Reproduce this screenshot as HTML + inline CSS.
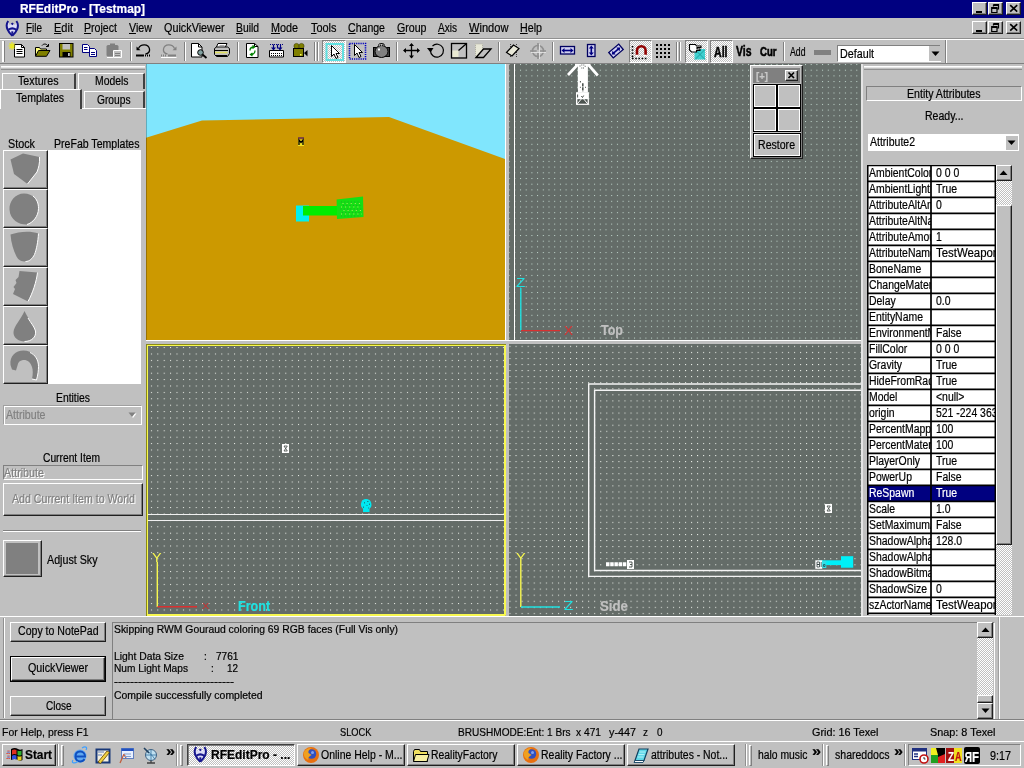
<!DOCTYPE html>
<html><head><meta charset="utf-8"><title>RFEditPro - [Testmap]</title>
<style>
html,body{margin:0;padding:0}
body{width:1024px;height:768px;position:relative;overflow:hidden;background:#c0c0c0;font-family:"Liberation Sans",sans-serif;color:#000}
div,span,svg{position:absolute;box-sizing:border-box}
.t{white-space:pre;transform-origin:0 0;line-height:1;-webkit-text-stroke:.2px}
.t u{text-decoration:underline;text-underline-offset:1px}
.rz{border:1px solid;border-color:#fff #202020 #202020 #fff;box-shadow:inset -1px -1px 0 #808080;background:#c0c0c0}
.sk{border:1px solid;border-color:#808080 #fff #fff #808080;background:#c0c0c0}
.sk2{border:1px solid;border-color:#808080 #fff #fff #808080;box-shadow:inset 1px 1px 0 #404040;background:#fff}
.pr{border:1px solid;border-color:#404040 #fff #fff #404040;box-shadow:inset 1px 1px 0 #808080;background:#c0c0c0}
.dith{background-image:conic-gradient(#fff 25%,#c0c0c0 0 50%,#fff 0 75%,#c0c0c0 0);background-size:2px 2px}
.vp{background-color:#5f6763;overflow:hidden}
.dots{left:0;top:0;width:100%;height:100%;background-image:radial-gradient(circle at 0.8px 0.8px,rgba(235,240,225,.85) 0.55px,rgba(235,240,225,0) 1.1px);background-size:6.4px 6.4px}
#w{left:0;top:0;width:1024px;height:768px;will-change:transform}

</style></head><body>
<div id="w">
<div class="" style="left:0px;top:0px;width:1024px;height:18px;background:#000080"></div>
<span class="t" style="left:20.0px;top:2.8px;font-size:12px;transform:scaleX(0.994);font-weight:bold;color:#fff;">RFEditPro - [Testmap]</span>
<div class="rz" style="left:972px;top:2px;width:15px;height:13px;"></div>
<div class="rz" style="left:988px;top:2px;width:15px;height:13px;"></div>
<div class="rz" style="left:1006px;top:2px;width:15px;height:13px;"></div>
<div style="left:976px;top:11px;width:6px;height:2px;background:#000"></div>
<svg style="left:988px;top:2px" width="15" height="13" viewBox="0 0 15 13"><path d="M5.500 2.500h5v4.500h-1.500 M5.500 3.500h5 M5.500 2.500v2" fill="none" stroke="#000" stroke-width="1.200"/><path d="M3.700 5.500h5.300v5h-5.300z M3.700 6.500h5.300" fill="none" stroke="#000" stroke-width="1.200"/></svg>
<svg style="left:1006px;top:2px" width="15" height="13" viewBox="0 0 15 13"><path d="M4.200 3.200l7 6.500 M11.200 3.200l-7 6.500" fill="none" stroke="#000" stroke-width="1.600"/></svg>
<div class="rz" style="left:972px;top:21px;width:15px;height:13px;"></div>
<div class="rz" style="left:988px;top:21px;width:15px;height:13px;"></div>
<div class="rz" style="left:1006px;top:21px;width:15px;height:13px;"></div>
<div style="left:976px;top:30px;width:6px;height:2px;background:#000"></div>
<svg style="left:988px;top:21px" width="15" height="13" viewBox="0 0 15 13"><path d="M5.500 2.500h5v4.500h-1.500 M5.500 3.500h5 M5.500 2.500v2" fill="none" stroke="#000" stroke-width="1.200"/><path d="M3.700 5.500h5.300v5h-5.300z M3.700 6.500h5.300" fill="none" stroke="#000" stroke-width="1.200"/></svg>
<svg style="left:1006px;top:21px" width="15" height="13" viewBox="0 0 15 13"><path d="M4.200 3.200l7 6.500 M11.200 3.200l-7 6.500" fill="none" stroke="#000" stroke-width="1.600"/></svg>
<span class="t" style="left:26.0px;top:21.8px;font-size:12px;transform:scaleX(0.827);"><u>F</u>ile</span>
<span class="t" style="left:54.0px;top:21.8px;font-size:12px;transform:scaleX(0.919);"><u>E</u>dit</span>
<span class="t" style="left:84.0px;top:21.8px;font-size:12px;transform:scaleX(0.884);"><u>P</u>roject</span>
<span class="t" style="left:129.0px;top:21.8px;font-size:12px;transform:scaleX(0.892);"><u>V</u>iew</span>
<span class="t" style="left:164.0px;top:21.8px;font-size:12px;transform:scaleX(0.901);">QuickViewer</span>
<span class="t" style="left:236.0px;top:21.8px;font-size:12px;transform:scaleX(0.862);"><u>B</u>uild</span>
<span class="t" style="left:271.0px;top:21.8px;font-size:12px;transform:scaleX(0.899);"><u>M</u>ode</span>
<span class="t" style="left:310.5px;top:21.8px;font-size:12px;transform:scaleX(0.910);"><u>T</u>ools</span>
<span class="t" style="left:348.0px;top:21.8px;font-size:12px;transform:scaleX(0.880);"><u>C</u>hange</span>
<span class="t" style="left:397.0px;top:21.8px;font-size:12px;transform:scaleX(0.884);"><u>G</u>roup</span>
<span class="t" style="left:438.0px;top:21.8px;font-size:12px;transform:scaleX(0.838);"><u>A</u>xis</span>
<span class="t" style="left:469.0px;top:21.8px;font-size:12px;transform:scaleX(0.925);"><u>W</u>indow</span>
<span class="t" style="left:520.0px;top:21.8px;font-size:12px;transform:scaleX(0.891);"><u>H</u>elp</span>
<svg style="left:5px;top:20px" width="15" height="17" viewBox="0 0 15 17"><path d="M3.200 1.500C1.800 4 1.800 7 2.800 9.500S5.500 14 7.300 15.500C9.100 14 10.800 12 11.800 9.500S12.800 4 11.400 1.500L10 5L7.300 3.500L4.600 5z" fill="#dcdcf6"/><path d="M3.200 1C1.400 3.500 1.400 6.800 2.500 9.300S5.300 14 7.300 15.800M11.400 1C13.200 3.500 13.200 6.800 12.100 9.300S9.300 14 7.300 15.800" fill="none" stroke="#14148c" stroke-width="2"/><path d="M7.300 2.400l1.500 1.400l-1.500 1.400l-1.500-1.400z" fill="#14148c"/><path d="M3 8.800Q7.300 5.800 11.600 8.800L11 10.800Q7.300 8.200 3.600 10.800z" fill="#14148c"/><rect x="6.300" y="11.300" width="2" height="2.600" fill="#14148c"/></svg>
<div class="" style="left:0px;top:38px;width:1024px;height:1px;background:#909090"></div>
<div class="" style="left:0px;top:39px;width:1024px;height:1px;background:#fff"></div>
<div class="" style="left:0px;top:63px;width:1024px;height:1px;background:#808080"></div>
<div class="" style="left:2px;top:41px;width:2px;height:21px;background:#fff;border-right:1px solid #808080;width:3px"></div>
<div class="" style="left:945px;top:40px;width:1px;height:23px;background:#808080"></div>
<div class="" style="left:946px;top:40px;width:1px;height:23px;background:#fff"></div>
<div class="dith" style="left:322px;top:40px;width:24px;height:23px;border:1px solid;border-color:#808080 #fff #fff #808080"></div>
<div class="dith" style="left:629px;top:40px;width:23px;height:23px;border:1px solid;border-color:#808080 #fff #fff #808080"></div>
<div class="dith" style="left:685px;top:40px;width:23px;height:23px;border:1px solid;border-color:#808080 #fff #fff #808080"></div>
<div class="dith" style="left:710px;top:40px;width:23px;height:23px;border:1px solid;border-color:#808080 #fff #fff #808080"></div>
<div class="" style="left:130px;top:42px;width:1px;height:19px;background:#808080"></div>
<div class="" style="left:131px;top:42px;width:1px;height:19px;background:#fff"></div>
<div class="" style="left:184px;top:42px;width:1px;height:19px;background:#808080"></div>
<div class="" style="left:185px;top:42px;width:1px;height:19px;background:#fff"></div>
<div class="" style="left:237px;top:42px;width:1px;height:19px;background:#808080"></div>
<div class="" style="left:238px;top:42px;width:1px;height:19px;background:#fff"></div>
<div class="" style="left:396px;top:42px;width:1px;height:19px;background:#808080"></div>
<div class="" style="left:397px;top:42px;width:1px;height:19px;background:#fff"></div>
<div class="" style="left:498px;top:42px;width:1px;height:19px;background:#808080"></div>
<div class="" style="left:499px;top:42px;width:1px;height:19px;background:#fff"></div>
<div class="" style="left:552px;top:42px;width:1px;height:19px;background:#808080"></div>
<div class="" style="left:553px;top:42px;width:1px;height:19px;background:#fff"></div>
<div class="" style="left:783px;top:42px;width:1px;height:19px;background:#808080"></div>
<div class="" style="left:784px;top:42px;width:1px;height:19px;background:#fff"></div>
<div class="" style="left:314px;top:42px;width:1px;height:19px;background:#808080"></div>
<div class="" style="left:315px;top:42px;width:1px;height:19px;background:#fff"></div>
<div class="" style="left:317px;top:42px;width:1px;height:19px;background:#808080"></div>
<div class="" style="left:318px;top:42px;width:1px;height:19px;background:#fff"></div>
<div class="" style="left:676px;top:42px;width:1px;height:19px;background:#808080"></div>
<div class="" style="left:677px;top:42px;width:1px;height:19px;background:#fff"></div>
<div class="" style="left:679px;top:42px;width:1px;height:19px;background:#808080"></div>
<div class="" style="left:680px;top:42px;width:1px;height:19px;background:#fff"></div>
<svg style="left:0;top:39px" width="1024" height="25" viewBox="0 39 1024 25"><path d="M14.500 44.500h7l3 3v9.500h-10z" fill="#fff" stroke="#000"/><path d="M21.500 44.500v3h3" fill="none" stroke="#000"/><path d="M16.500 49.500h6M16.500 51.500h6M16.500 53.500h6" stroke="#000"/><path d="M12 42v8M8.500 46h7M9.500 43.500l5 5M14.500 43.500l-5 5" stroke="#e8e820" stroke-width="1.200"/><path d="M35.500 56v-8.500h4l1 1.500h6v2" fill="#ffff80" stroke="#000"/><path d="M35.500 56.300l3-5.800h11.500l-3.500 5.800z" fill="#808000" stroke="#000"/><path d="M42 45.500c1.500-2 4.500-2 6 0.500m0.500-2v2.500h-2.500" fill="none" stroke="#000"/><rect x="59.500" y="43.500" width="13.500" height="13.500" fill="#808000" stroke="#000"/><rect x="62.500" y="44" width="7.500" height="5.500" fill="#c0c0c0"/><rect x="62.500" y="52" width="8" height="5" fill="#000"/><rect x="68" y="53" width="1.800" height="3" fill="#c0c0c0"/><path d="M82.500 44.500h5l2 2v6h-7z" fill="#fff" stroke="#000080"/><path d="M89.500 48.500h5l2 2v6h-7z" fill="#fff" stroke="#000080"/><path d="M84 47.500h3.500M84 49.500h3.500M91 52.500h4M91 54.500h4" stroke="#000080"/><rect x="106.500" y="45" width="12" height="11.500" rx="1.500" fill="#808080"/><rect x="110" y="43.500" width="5" height="3" fill="#808080"/><path d="M113.500 50.500h8v7h-8z" fill="#c0c0c0" stroke="#fff"/><path d="M115 53.500h5M115 55.500h5" stroke="#808080"/><path d="M107 57.500h6" stroke="#fff"/><path d="M138.500 48.500c2-5 10-5 11 0.500c0.500 3-1.500 4.500-4 5" fill="none" stroke="#000" stroke-width="1.300"/><path d="M136.500 46.500v3.800h4z" fill="#000"/><path d="M136 55.500h8" stroke="#000" stroke-width="2"/><path d="M145 55.500h6" stroke="#000" stroke-width="2" stroke-dasharray="1 1"/><path d="M174.500 48.500c-2-5-10-5-11 0.500c-0.500 3 1.500 4.500 4 5" fill="none" stroke="#808080" stroke-width="1.300"/><path d="M176.500 46.500v3.800h-4z" fill="#808080"/><path d="M168 55.500h8" stroke="#808080" stroke-width="2"/><path d="M161 55.500h6" stroke="#808080" stroke-width="2" stroke-dasharray="1 1"/><path d="M161 57.500h15.500" stroke="#fff"/><path d="M191.500 43.500h7l3.500 3.500v10h-10.500z" fill="#fff" stroke="#000"/><path d="M198.500 43.500v3.500h3.500" fill="none" stroke="#000"/><circle cx="200.500" cy="52.500" r="2.800" fill="#80a0a0" stroke="#000"/><path d="M202.500 54.500l4 3.500" stroke="#000" stroke-width="1.800"/><path d="M218 43.500h9l-2 4.500h-9z" fill="#fff" stroke="#000"/><path d="M214.500 48.500l2-1.500h11l2 1.500v5l-2 3h-11l-2-2z" fill="#c0c0c0" stroke="#000"/><path d="M215 52.500h12.500" stroke="#e0e060" stroke-width="1.500"/><path d="M215 50.500h13M216 55.500h11" stroke="#000"/><path d="M219.500 45.500h5M219 46.800h5" stroke="#808080" stroke-width=".7"/><path d="M246.500 43.500h8l3.500 3v11h-11.500z" fill="#fff" stroke="#000"/><path d="M254.500 43.500v3h3.500" fill="none" stroke="#000"/><path d="M250 50.500c0-2.500 2-3.500 4-3.500m-1.500-1.500l2 1.500l-2 1.500 M255 50.500c0 2.500-2 4-4 4m1.500-1.500l-2 1.500l2 1.500" fill="none" stroke="#008000" stroke-width="1.300"/><path d="M269.500 50.500h14v6.500h-14z" fill="#fff" stroke="#000"/><path d="M271 53.500h12M271 55.500h12" stroke="#000" stroke-dasharray="1 1"/><path d="M273.500 44.500v4m4 -4v4 M280.500 44.500v4" stroke="#000080" stroke-width="1.200"/><path d="M271 47.500h5l-2.500 3z M277.500 47.500h5l-2.500 3z" fill="#000080"/><path d="M270 44.500h13" stroke="#000080" stroke-dasharray="1 1"/><circle cx="296.500" cy="46" r="2.600" fill="#808000" stroke="#404000" stroke-width=".6"/><circle cx="301.500" cy="46" r="2.600" fill="#808000" stroke="#404000" stroke-width=".6"/><rect x="293.500" y="48.500" width="10" height="8" fill="#808000" stroke="#000"/><path d="M304 53l3.500-3v6.500z" fill="#000"/><rect x="300" y="54" width="1.500" height="1.500" fill="#ffff60"/><rect x="326.500" y="44" width="16.500" height="16" fill="none" stroke="#60e0e0" stroke-width="2"/><path d="M331.500 45.500v11l2.500-2.500l2 4.500l2-1l-2-4h3.500z" fill="#fff" stroke="#000"/><rect x="349.500" y="43.500" width="16" height="15.500" fill="none" stroke="#0000c0" stroke-width="1.600" stroke-dasharray="1.200 1"/><path d="M354.500 44.500v11l2.500-2.500l2 4.500l2-1l-2-4h3.500z" fill="#fff" stroke="#000"/><rect x="373.500" y="47.500" width="16" height="9" fill="#404040" stroke="#000"/><ellipse cx="381.500" cy="51.500" rx="6.500" ry="6" fill="#808080" stroke="#000"/><path d="M378.500 45.500c1-2.500 5-2.500 6 0" fill="none" stroke="#000" stroke-width="1.300"/><path d="M379 45h4.500" stroke="#fff" stroke-dasharray="1 1"/><rect x="378" y="48.500" width="2" height="2" fill="#fff"/><path d="M404 50.500h15M411.500 44v14" stroke="#000" stroke-width="1.300"/><path d="M403 50.500l3-2.500v5z M420 50.500l-3-2.500v5z M411.500 43l-2.500 3h5z M411.500 58.500l-2.500-3h5z" fill="#000"/><path d="M430.500 50.500a6.500 6.500 0 1 0 2-4.500" fill="none" stroke="#000" stroke-width="1.200"/><path d="M427 48h6.500l-3 4.500z" fill="#000"/><rect x="451.500" y="43.500" width="15" height="14.500" fill="none" stroke="#000" stroke-width="1.300"/><rect x="452.500" y="50.500" width="6" height="6.500" fill="#e8e8d0"/><path d="M458.500 50.500l7.500-6.500" stroke="#000" stroke-width="1.300"/><rect x="475.500" y="44" width="7" height="13" fill="#e8e8d8" stroke="#b0b0a0" stroke-dasharray="1 1"/><path d="M476 57.500l7.500-8.500h7.500l-7.500 8.500z" fill="#c0c0c0" stroke="#000" stroke-width="1.300"/><path d="M510.500 44v13.500M516.500 44v13.500" stroke="#404040" stroke-dasharray="1 1"/><path d="M506.500 52.500l7-7.500l5.500 3.500l-7 7.500z" fill="#e8e8d8" stroke="#000" stroke-width="1.200"/><circle cx="538" cy="51" r="5.500" fill="none" stroke="#909090" stroke-width="1.600"/><path d="M530 51h16M538 43v16" stroke="#909090" stroke-width="1.600"/><circle cx="538" cy="51" r="1.500" fill="#c0c0c0"/><path d="M531 52.500h15M539.500 44v15" stroke="#e8e8e8" stroke-width=".8"/><rect x="560.500" y="46.500" width="14" height="7.500" fill="#d0d0f0" stroke="#000060" stroke-width="1.300"/><path d="M563 50.500h9" stroke="#000080" stroke-width="1.600"/><path d="M561.500 50.500l3-2.500v5z M573.500 50.500l-3-2.500v5z" fill="#000080"/><rect x="587.500" y="44.500" width="7.500" height="12" fill="#d0d0f0" stroke="#000060" stroke-width="1.300"/><path d="M591.300 47v7" stroke="#000080" stroke-width="1.600"/><path d="M591.300 45.500l-2.500 3h5z M591.300 55.500l-2.500-3h5z" fill="#000080"/><g transform="rotate(-40 616 51)"><rect x="609.500" y="47.500" width="13" height="7" fill="#d0d0f0" stroke="#000060" stroke-width="1.300"/><path d="M612 51h8" stroke="#000080" stroke-width="1.600"/><path d="M610.500 51l3-2.500v5z M621.500 51l-3-2.500v5z" fill="#000080"/></g><path d="M637 56v-5.500a4.300 4.300 0 0 1 8.600 0v5.500" fill="none" stroke="#900000" stroke-width="2.600"/><path d="M635.500 55.500h3M643.800 55.500h3" stroke="#fff" stroke-width="1.600"/><path d="M632.500 46v13" stroke="#000" stroke-width="1.600" stroke-dasharray="1.600 1.600"/><path d="M632 58.500h16" stroke="#000" stroke-width="1.600" stroke-dasharray="1.600 1.600"/><path d="M656 45.0h14" stroke="#000" stroke-width="2" stroke-dasharray="2 2"/><path d="M656 49.0h14" stroke="#000" stroke-width="2" stroke-dasharray="2 2"/><path d="M656 53.0h14" stroke="#000" stroke-width="2" stroke-dasharray="2 2"/><path d="M656 57.0h14" stroke="#000" stroke-width="2" stroke-dasharray="2 2"/><rect x="694.500" y="49" width="10.500" height="10.500" fill="#40d0d0"/><path d="M695 49.500l10 10M705 49.500l-10 10" stroke="#20a0a0" stroke-width="1"/><path d="M689.500 44.500h6l1 1.500h4.500v1.500h-4v1.500h3v1.500h-3.500v1.500h-5l-2-2z" fill="#fff" stroke="#000" stroke-width="1.100"/><rect x="814" y="50" width="17" height="5" fill="#808080"/></svg>
<span class="t" style="left:714.0px;top:44.7px;font-size:14px;transform:scaleX(0.755);font-weight:bold;-webkit-text-stroke:.5px #000;">All</span>
<span class="t" style="left:736.0px;top:43.6px;font-size:14px;transform:scaleX(0.747);font-weight:bold;-webkit-text-stroke:.5px #000;">Vis</span>
<span class="t" style="left:759.8px;top:45.6px;font-size:12px;transform:scaleX(0.798);font-weight:bold;-webkit-text-stroke:.6px #000;">Cur</span>
<span class="t" style="left:789.8px;top:45.8px;font-size:12px;transform:scaleX(0.726);">Add</span>
<div class="" style="left:837px;top:45px;width:104px;height:17px;background:#fff;border:1px solid;border-color:#808080 #fff #fff #808080"></div>
<span class="t" style="left:839.5px;top:47.8px;font-size:12px;transform:scaleX(0.894);">Default</span>
<div class="" style="left:929px;top:46px;width:12px;height:15px;background:#c0c0c0"></div>
<svg style="left:930.500px;top:50.500px" width="9" height="6"><path d="M0.500 0.500h8l-4 4.500z" fill="#000"/></svg>
<div class="" style="left:1px;top:66px;width:144px;height:4px;background:linear-gradient(#e4e4e4 0 1px,#c0c0c0 1px);border-top:1px solid #fff;border-bottom:1px solid #909090"></div>
<div class="" style="left:2px;top:73px;width:74px;height:16px;border-top:1px solid #fff;border-left:1px solid #fff;border-right:2px solid #404040;background:#c0c0c0;"></div>
<div class="" style="left:78px;top:73px;width:67px;height:16px;border-top:1px solid #fff;border-left:1px solid #fff;border-right:2px solid #404040;background:#c0c0c0;"></div>
<div class="" style="left:84px;top:91px;width:61px;height:17px;border-top:1px solid #fff;border-left:1px solid #fff;border-right:2px solid #404040;background:#c0c0c0;"></div>
<div class="" style="left:0px;top:108px;width:146px;height:1px;background:#fff"></div>
<div class="" style="left:0px;top:89px;width:82px;height:20px;border-top:1px solid #fff;border-left:1px solid #fff;border-right:2px solid #404040;background:#c0c0c0;"></div>
<span class="t" style="left:17.5px;top:74.8px;font-size:12px;transform:scaleX(0.893);">Textures</span>
<span class="t" style="left:94.5px;top:74.8px;font-size:12px;transform:scaleX(0.866);">Models</span>
<span class="t" style="left:16.0px;top:92.1px;font-size:12px;transform:scaleX(0.878);">Templates</span>
<span class="t" style="left:96.5px;top:93.8px;font-size:12px;transform:scaleX(0.851);">Groups</span>
<span class="t" style="left:7.5px;top:137.6px;font-size:12px;transform:scaleX(0.900);">Stock</span>
<span class="t" style="left:53.5px;top:137.6px;font-size:12px;transform:scaleX(0.880);">PreFab Templates</span>
<div class="" style="left:48px;top:150px;width:93px;height:234px;background:#fff"></div>
<div class="rz" style="left:3px;top:150px;width:45px;height:39px;"></div>
<svg style="left:0px;top:150px" width="48" height="39" viewBox="0 0 48 39"><path d="M10.500 9.500l12.500-6l16.500 3.500c.5 6-1 11-2.500 15l-9.500 12l-13.500-10z" fill="#808080"/><path d="M39.500 7c.5 6-1 11-2.500 15l-9.500 12" fill="none" stroke="#fff" stroke-width="1"/></svg>
<div class="rz" style="left:3px;top:189px;width:45px;height:39px;"></div>
<svg style="left:0px;top:189px" width="48" height="39" viewBox="0 0 48 39"><path d="M24 4.500c9 0 14.500 6.500 14.500 15c0 8-6 14.500-11.500 16c-7 .5-17-4-17.500-15c-.5-8 5.500-16 14.500-16z" fill="#808080"/><path d="M33 7c4 3 5.500 7.500 5.500 12.500c0 8-6 14.500-11.500 16" fill="none" stroke="#fff" stroke-width="1"/></svg>
<div class="rz" style="left:3px;top:228px;width:45px;height:39px;"></div>
<svg style="left:0px;top:228px" width="48" height="39" viewBox="0 0 48 39"><path d="M10.500 6.500c8-3 20-4 28-1c-.5 8-2 16-4 21c-2 4-5 7-9 7c-4 0-7-1-9-5c-3-6-5.500-14-6-22z" fill="#808080"/><path d="M38.500 5.500c-.5 8-2 16-4 21c-2 4-5 7-9 7" fill="none" stroke="#fff" stroke-width="1"/></svg>
<div class="rz" style="left:3px;top:267px;width:45px;height:39px;"></div>
<svg style="left:0px;top:267px" width="48" height="39" viewBox="0 0 48 39"><path d="M19.500 4l18 1.500c-1 9-5 21-9.500 29l-15-7.500l2-5l-1.500-2l3-4l-1-3l3-3z" fill="#808080"/><path d="M37.500 5.500c-1 9-5 21-9.500 29" fill="none" stroke="#fff" stroke-width="1"/></svg>
<div class="rz" style="left:3px;top:306px;width:45px;height:39px;"></div>
<svg style="left:0px;top:306px" width="48" height="39" viewBox="0 0 48 39"><path d="M24.500 5c3 7 9.500 14 11 20c1 6-4 10.500-11 10.500c-6 0-11.500-4-11-9.500c.5-6 7-12 11-21z" fill="#808080"/><path d="M28 12c3 5 6.500 9 7.500 13c1 6-4 10.500-11 10.500" fill="none" stroke="#fff" stroke-width="1"/></svg>
<div class="rz" style="left:3px;top:345px;width:45px;height:39px;"></div>
<svg style="left:0px;top:345px" width="48" height="39" viewBox="0 0 48 39"><path d="M10.500 20c-1-9 5-14.500 13-14.500c9 0 15 7 15 16c0 4-.5 8-2 13.500l-4.500-1c1-5 1-9 0-12c-1.500-5-5-7.500-9-7c-3.500.5-5 2.500-5.500 5.500l-1.500 5l-4-1z" fill="#808080"/><path d="M30 7.500c5 2 8.500 7.500 8.500 14c0 4-.5 8-2 13.500l-4.500-1" fill="none" stroke="#fff" stroke-width="1"/></svg>
<span class="t" style="left:55.5px;top:391.8px;font-size:12px;transform:scaleX(0.864);">Entities</span>
<div class="" style="left:4px;top:406px;width:138px;height:19px;border:1px solid #fff;box-shadow:-1px -1px 0 #a0a0a0"></div>
<span class="t" style="left:6.0px;top:408.6px;font-size:12px;transform:scaleX(0.884);color:#808080;">Attribute</span>
<svg style="left:128px;top:412px" width="10" height="7"><path d="M1.500 1.500h7l-3.500 4.500z" fill="#fff"/><path d="M0.500 0.500h7l-3.500 4.500z" fill="#808080"/></svg>
<span class="t" style="left:42.5px;top:451.8px;font-size:12px;transform:scaleX(0.855);">Current Item</span>
<div class="sk" style="left:3px;top:465px;width:140px;height:15px;"></div>
<span class="t" style="left:4.8px;top:468.1px;font-size:12px;transform:scaleX(0.895);color:#fff;">Attribute</span>
<span class="t" style="left:3.8px;top:467.1px;font-size:12px;transform:scaleX(0.895);color:#808080;">Attribute</span>
<div class="rz" style="left:3px;top:483px;width:140px;height:33px;"></div>
<span class="t" style="left:13.0px;top:493.8px;font-size:12px;transform:scaleX(0.884);color:#fff;">Add Current Item to World</span>
<span class="t" style="left:12.0px;top:492.8px;font-size:12px;transform:scaleX(0.884);color:#808080;">Add Current Item to World</span>
<div class="" style="left:3px;top:530px;width:138px;height:1px;background:#808080"></div>
<div class="" style="left:3px;top:531px;width:138px;height:1px;background:#fff"></div>
<div class="rz" style="left:3px;top:540px;width:39px;height:37px;"></div>
<div class="" style="left:6px;top:543px;width:32px;height:31px;background:#808080"></div>
<span class="t" style="left:47.0px;top:553.8px;font-size:12px;transform:scaleX(0.891);">Adjust Sky</span>
<div class="" style="left:146px;top:340px;width:715px;height:1px;background:#fff"></div>
<div class="" style="left:505px;top:64px;width:1px;height:277px;background:#fff"></div>
<svg style="left:146px;top:64px" width="359" height="276" viewBox="146 64 359 276"><rect x="146" y="64" width="359" height="276" fill="#80e6fd"/><path d="M146 137.800L202 120.500L389 117L505 159V340H146z" fill="#cc9900"/><rect x="146" y="64" width="1" height="276" fill="#000" fill-opacity=".25"/><rect x="296" y="205.500" width="13" height="16" fill="#00f0f0"/><rect x="303" y="206" width="36" height="9.500" fill="#00ec00"/><path d="M336.600 199.500l26.400-3l.5 20.500l-26.500 2z" fill="#14e014"/><path d="M341 202h20M343 205.500h19M340.500 209h21M342 212.500h20M341 216h20" stroke="#20a828" stroke-width="1" stroke-dasharray="1 2.300"/><path d="M342.500 203.500h18M341 207h20M343.500 210.500h18M341 214h21" stroke="#b0e860" stroke-width="1" stroke-dasharray="1 3.100"/><rect x="298" y="137" width="6" height="2.500" fill="#80483c"/><rect x="298" y="139.500" width="6" height="6.500" fill="#f0e020"/><path d="M299 145v-5l2 2.500l2-2.500v5" fill="none" stroke="#000" stroke-width="1.300"/></svg>
<svg style="left:509px;top:64px" width="352" height="276" viewBox="0 0 352 276"><defs><pattern id="pt" x="5.30" y="0.00" width="5.7" height="5.7" patternUnits="userSpaceOnUse"><rect width="1" height="1" fill="#d4ece2" fill-opacity="0.85"/></pattern></defs><rect width="352" height="276" fill="#646c68"/><rect width="352" height="276" fill="url(#pt)"/></svg>
<div class="" style="left:514px;top:64px;width:1px;height:276px;background:#fff"></div>
<svg style="left:146px;top:344px" width="360" height="272" viewBox="0 0 360 272"><defs><pattern id="pf" x="4.90" y="3.10" width="6.4" height="6.4" patternUnits="userSpaceOnUse"><rect width="1" height="1" fill="#f2f5ee" fill-opacity="1"/></pattern></defs><rect width="360" height="272" fill="#646c68"/><rect width="360" height="272" fill="url(#pf)"/><rect x="1.500" y="1.500" width="357" height="269" fill="none" stroke="#f8f850" stroke-width="1"/><path d="M0.500 272V0.500H360" fill="none" stroke="#8c8c14" stroke-width="1"/><path d="M1 271.500H359.500V1" fill="none" stroke="#f8f850" stroke-width="1"/></svg>
<div class="" style="left:148px;top:514px;width:356px;height:1px;background:#f0f0f0"></div>
<div class="" style="left:148px;top:520px;width:356px;height:1px;background:#f0f0f0"></div>
<svg style="left:509px;top:344px" width="352" height="272" viewBox="0 0 352 272"><defs><pattern id="ps" x="0.50" y="1.80" width="6.052" height="6.07" patternUnits="userSpaceOnUse"><rect width="1" height="1" fill="#f2f5ee" fill-opacity="1"/></pattern></defs><rect width="352" height="272" fill="#646c68"/><rect width="352" height="272" fill="url(#ps)"/></svg>
<svg style="left:0;top:0" width="1024" height="768" viewBox="0 0 1024 768"><g fill="#fff" stroke="none"><rect x="575" y="63.800" width="15.500" height="2"/><rect x="577.800" y="64" width="10.100" height="28.500"/><rect x="576" y="92.200" width="12.900" height="12.700"/></g><path d="M577.300 65L568 75M588.600 65L597.800 75.500" stroke="#fff" stroke-width="2.700" fill="none"/><path d="M577.400 99.200h10.200v4.500h-10.200z" fill="#4c5450"/><path d="M577.300 103.800L582.500 97.600L587.700 103.800" fill="none" stroke="#fff" stroke-width="1"/><path d="M582.500 97.500l-1.200-1.500M582.500 97.500l1.200-2" stroke="#4c5450" stroke-width="1"/><path d="M582.800 83.200v8.600" stroke="#4c5450" stroke-width="1.600" stroke-dasharray="3.300 .8"/><path d="M580.400 81v1.500M580.400 86.800v1M585.500 86.800v1M577.200 89.500v2M577.600 94.500v3" stroke="#4c5450" stroke-width="1"/><path d="M579.500 66h1M581.300 65h1M583.300 65h1M584.700 66.300h1M581.300 68h1M583 68h1" stroke="#4c5450" stroke-width=".9"/><path d="M520.800 288v42.500" stroke="#20e0e0" stroke-width="1.400"/><path d="M521 330.600h39" stroke="#d83030" stroke-width="1.400"/><path d="M157.300 562v45" stroke="#f8f850" stroke-width="1.400"/><path d="M157.500 606.700h39.500" stroke="#d83030" stroke-width="1.400"/><path d="M520.800 562v45" stroke="#f8f850" stroke-width="1.400"/><path d="M521 607h39" stroke="#20e0e0" stroke-width="1.400"/><rect x="282.500" y="444.500" width="6" height="8" fill="#fff" stroke="#fff"/><path d="M284 446l3.300 5h-3.300l3.300-5z" fill="none" stroke="#404844" stroke-width=".8"/><path d="M361 505c0-4 2-6 5-6s5.500 2 5.500 6c0 2-1 3-2 3.500v3.500h-6.500v-3.500c-1-.5-2-1.500-2-3.500z" fill="#00e8f0"/><path d="M364.500 502v1.500M367 501.500h1.500M369.500 503.500v1.500M363.500 506.500v1.500M366.500 505.500h1M368.500 507.500v1" stroke="#108890" stroke-width="1"/><path d="M861 384H588.700V576.400H861M861 390.200H594.600V570.500H861" fill="none" stroke="#f4f4f4" stroke-width="1.400"/><rect x="825.500" y="504.500" width="6" height="8" fill="#fff" stroke="#fff"/><path d="M827 506l3.300 5h-3.300l3.300-5z" fill="none" stroke="#404844" stroke-width=".8"/><path d="M606 564.300h21" stroke="#fff" stroke-width="4" stroke-dasharray="3.500 .7"/><rect x="627.500" y="560.500" width="6" height="8" fill="#fff" stroke="#fff"/><path d="M629 562h3v2.500h-2M632 564.500v2.500h-3" fill="none" stroke="#404844" stroke-width=".9"/><rect x="841" y="556.200" width="12.200" height="11.500" fill="#00f0f8"/><rect x="819" y="560.300" width="23" height="4.800" fill="#00f0f8"/><rect x="815.300" y="560.300" width="7" height="8.500" fill="#fff"/><rect x="822.300" y="561" width="4" height="7" fill="#30e0e8"/><path d="M817 562h2.500v2.500h-2.500zM817 564.500h2.500v2.500h-2.500z" fill="none" stroke="#304040" stroke-width=".8"/><path d="M821.200 562v5M823.500 564.500h1.500v2h-1.500z" fill="none" stroke="#205058" stroke-width=".8"/></svg>
<span class="t" style="left:516.2px;top:277.2px;font-size:12px;transform:scaleX(1.269);color:#20e0e0;-webkit-text-stroke:0;">Z</span>
<span class="t" style="left:564.0px;top:324.8px;font-size:12px;transform:scaleX(1.124);color:#d83030;-webkit-text-stroke:0;">X</span>
<span class="t" style="left:152.4px;top:552.4px;font-size:12px;transform:scaleX(1.199);color:#f8f850;-webkit-text-stroke:0;">Y</span>
<span class="t" style="left:201.6px;top:601.3px;font-size:9.5px;transform:scaleX(1.152);color:#c83030;-webkit-text-stroke:0;">X</span>
<span class="t" style="left:516.0px;top:552.4px;font-size:12px;transform:scaleX(1.199);color:#f8f850;-webkit-text-stroke:0;">Y</span>
<span class="t" style="left:564.2px;top:600.2px;font-size:12px;transform:scaleX(1.269);color:#20e0e0;-webkit-text-stroke:0;">Z</span>
<span class="t" style="left:601.0px;top:322.9px;font-size:14px;transform:scaleX(0.894);font-weight:bold;color:#c0c0c0;">Top</span>
<span class="t" style="left:237.7px;top:599.1px;font-size:14px;transform:scaleX(0.900);font-weight:bold;color:#20e0e0;">Front</span>
<span class="t" style="left:600.0px;top:599.1px;font-size:14px;transform:scaleX(0.947);font-weight:bold;color:#c0c0c0;">Side</span>
<div class="rz" style="left:750px;top:65px;width:53px;height:94px;"></div>
<div class="" style="left:753px;top:68px;width:47px;height:15px;background:#808080"></div>
<span class="t" style="left:756.0px;top:70.7px;font-size:11px;transform:scaleX(0.873);font-weight:bold;color:#c8c8c8;">[+]</span>
<div class="rz" style="left:785px;top:70px;width:13px;height:11px;"></div>
<svg style="left:785px;top:70px" width="13" height="11"><path d="M3.500 2.500l5.500 5.500M9 2.500l-5.500 5.500" stroke="#000" stroke-width="1.700"/></svg>
<div class="" style="left:753px;top:84px;width:24px;height:24px;background:#c0c0c0;border:1px solid #000;box-shadow:inset 1px 1px 0 #fff,inset -1px -1px 0 #fff"></div>
<div class="" style="left:777px;top:84px;width:24px;height:24px;background:#c0c0c0;border:1px solid #000;box-shadow:inset 1px 1px 0 #fff,inset -1px -1px 0 #fff"></div>
<div class="" style="left:753px;top:108px;width:24px;height:24px;background:#c0c0c0;border:1px solid #000;box-shadow:inset 1px 1px 0 #fff,inset -1px -1px 0 #fff"></div>
<div class="" style="left:777px;top:108px;width:24px;height:24px;background:#c0c0c0;border:1px solid #000;box-shadow:inset 1px 1px 0 #fff,inset -1px -1px 0 #fff"></div>
<div class="" style="left:753px;top:107px;width:47px;height:2px;background:#000"></div>
<div class="" style="left:753px;top:133px;width:48px;height:24px;background:#c0c0c0;border:1px solid #000;box-shadow:inset 1px 1px 0 #fff,inset -1px -1px 0 #fff"></div>
<span class="t" style="left:758.3px;top:138.6px;font-size:12px;transform:scaleX(0.881);">Restore</span>
<div class="" style="left:861px;top:64px;width:2px;height:552px;background:#e4e4e4"></div>
<div class="" style="left:864px;top:66px;width:158px;height:4px;background:linear-gradient(#e4e4e4 0 1px,#c0c0c0 1px);border-top:1px solid #fff;border-bottom:1px solid #909090"></div>
<div class="sk" style="left:866px;top:86px;width:156px;height:15px;"></div>
<span class="t" style="left:906.7px;top:87.8px;font-size:12px;transform:scaleX(0.882);">Entity Attributes</span>
<span class="t" style="left:924.5px;top:109.8px;font-size:12px;transform:scaleX(0.879);">Ready...</span>
<div class="" style="left:868px;top:134px;width:151px;height:17px;background:#fff"></div>
<span class="t" style="left:870.0px;top:136.3px;font-size:12px;transform:scaleX(0.876);">Attribute2</span>
<div class="" style="left:1006px;top:136px;width:12px;height:14px;background:#c0c0c0"></div>
<svg style="left:1007px;top:140px" width="10" height="6"><path d="M0.500 0.500h8l-4 4.500z" fill="#000"/></svg>
<div class="" style="left:867px;top:165px;width:129.3px;height:450px;overflow:hidden"><div class="" style="left:0px;top:0px;width:130px;height:451px;background:#fff"></div><div style="left:2px;top:0px;width:62px;height:16px;overflow:hidden"><span class="t" style="left:0.0px;top:1.8px;font-size:12px;transform:scaleX(0.870);">AmbientColor</span></div><div style="left:65px;top:0px;width:64px;height:16px;overflow:hidden"><span class="t" style="left:4.0px;top:1.8px;font-size:12px;transform:scaleX(0.870);">0 0 0</span></div><div style="left:2px;top:16px;width:62px;height:16px;overflow:hidden"><span class="t" style="left:0.0px;top:1.8px;font-size:12px;transform:scaleX(0.870);">AmbientLightFromFloor</span></div><div style="left:65px;top:16px;width:64px;height:16px;overflow:hidden"><span class="t" style="left:4.0px;top:1.8px;font-size:12px;transform:scaleX(0.870);">True</span></div><div style="left:2px;top:32px;width:62px;height:16px;overflow:hidden"><span class="t" style="left:0.0px;top:1.8px;font-size:12px;transform:scaleX(0.870);">AttributeAltAmount</span></div><div style="left:65px;top:32px;width:64px;height:16px;overflow:hidden"><span class="t" style="left:4.0px;top:1.8px;font-size:12px;transform:scaleX(0.870);">0</span></div><div style="left:2px;top:48px;width:62px;height:16px;overflow:hidden"><span class="t" style="left:0.0px;top:1.8px;font-size:12px;transform:scaleX(0.870);">AttributeAltName</span></div><div style="left:2px;top:64px;width:62px;height:16px;overflow:hidden"><span class="t" style="left:0.0px;top:1.8px;font-size:12px;transform:scaleX(0.870);">AttributeAmount</span></div><div style="left:65px;top:64px;width:64px;height:16px;overflow:hidden"><span class="t" style="left:4.0px;top:1.8px;font-size:12px;transform:scaleX(0.870);">1</span></div><div style="left:2px;top:80px;width:62px;height:16px;overflow:hidden"><span class="t" style="left:0.0px;top:1.8px;font-size:12px;transform:scaleX(0.870);">AttributeName</span></div><div style="left:65px;top:80px;width:64px;height:16px;overflow:hidden"><span class="t" style="left:4.0px;top:1.8px;font-size:12px;transform:scaleX(0.950);">TestWeapon</span></div><div style="left:2px;top:96px;width:62px;height:16px;overflow:hidden"><span class="t" style="left:0.0px;top:1.8px;font-size:12px;transform:scaleX(0.870);">BoneName</span></div><div style="left:2px;top:112px;width:62px;height:16px;overflow:hidden"><span class="t" style="left:0.0px;top:1.8px;font-size:12px;transform:scaleX(0.870);">ChangeMaterial</span></div><div style="left:2px;top:128px;width:62px;height:16px;overflow:hidden"><span class="t" style="left:0.0px;top:1.8px;font-size:12px;transform:scaleX(0.870);">Delay</span></div><div style="left:65px;top:128px;width:64px;height:16px;overflow:hidden"><span class="t" style="left:4.0px;top:1.8px;font-size:12px;transform:scaleX(0.870);">0.0</span></div><div style="left:2px;top:144px;width:62px;height:16px;overflow:hidden"><span class="t" style="left:0.0px;top:1.8px;font-size:12px;transform:scaleX(0.870);">EntityName</span></div><div style="left:2px;top:160px;width:62px;height:16px;overflow:hidden"><span class="t" style="left:0.0px;top:1.8px;font-size:12px;transform:scaleX(0.870);">EnvironmentMapping</span></div><div style="left:65px;top:160px;width:64px;height:16px;overflow:hidden"><span class="t" style="left:4.0px;top:1.8px;font-size:12px;transform:scaleX(0.870);">False</span></div><div style="left:2px;top:176px;width:62px;height:16px;overflow:hidden"><span class="t" style="left:0.0px;top:1.8px;font-size:12px;transform:scaleX(0.870);">FillColor</span></div><div style="left:65px;top:176px;width:64px;height:16px;overflow:hidden"><span class="t" style="left:4.0px;top:1.8px;font-size:12px;transform:scaleX(0.870);">0 0 0</span></div><div style="left:2px;top:192px;width:62px;height:16px;overflow:hidden"><span class="t" style="left:0.0px;top:1.8px;font-size:12px;transform:scaleX(0.870);">Gravity</span></div><div style="left:65px;top:192px;width:64px;height:16px;overflow:hidden"><span class="t" style="left:4.0px;top:1.8px;font-size:12px;transform:scaleX(0.870);">True</span></div><div style="left:2px;top:208px;width:62px;height:16px;overflow:hidden"><span class="t" style="left:0.0px;top:1.8px;font-size:12px;transform:scaleX(0.870);">HideFromRadar</span></div><div style="left:65px;top:208px;width:64px;height:16px;overflow:hidden"><span class="t" style="left:4.0px;top:1.8px;font-size:12px;transform:scaleX(0.870);">True</span></div><div style="left:2px;top:224px;width:62px;height:16px;overflow:hidden"><span class="t" style="left:0.0px;top:1.8px;font-size:12px;transform:scaleX(0.870);">Model</span></div><div style="left:65px;top:224px;width:64px;height:16px;overflow:hidden"><span class="t" style="left:4.0px;top:1.8px;font-size:12px;transform:scaleX(0.870);">&lt;null&gt;</span></div><div style="left:2px;top:240px;width:62px;height:16px;overflow:hidden"><span class="t" style="left:0.0px;top:1.8px;font-size:12px;transform:scaleX(0.870);">origin</span></div><div style="left:65px;top:240px;width:64px;height:16px;overflow:hidden"><span class="t" style="left:4.0px;top:1.8px;font-size:12px;transform:scaleX(0.870);">521 -224 363</span></div><div style="left:2px;top:256px;width:62px;height:16px;overflow:hidden"><span class="t" style="left:0.0px;top:1.8px;font-size:12px;transform:scaleX(0.870);">PercentMapping</span></div><div style="left:65px;top:256px;width:64px;height:16px;overflow:hidden"><span class="t" style="left:4.0px;top:1.8px;font-size:12px;transform:scaleX(0.870);">100</span></div><div style="left:2px;top:272px;width:62px;height:16px;overflow:hidden"><span class="t" style="left:0.0px;top:1.8px;font-size:12px;transform:scaleX(0.870);">PercentMaterial</span></div><div style="left:65px;top:272px;width:64px;height:16px;overflow:hidden"><span class="t" style="left:4.0px;top:1.8px;font-size:12px;transform:scaleX(0.870);">100</span></div><div style="left:2px;top:288px;width:62px;height:16px;overflow:hidden"><span class="t" style="left:0.0px;top:1.8px;font-size:12px;transform:scaleX(0.870);">PlayerOnly</span></div><div style="left:65px;top:288px;width:64px;height:16px;overflow:hidden"><span class="t" style="left:4.0px;top:1.8px;font-size:12px;transform:scaleX(0.870);">True</span></div><div style="left:2px;top:304px;width:62px;height:16px;overflow:hidden"><span class="t" style="left:0.0px;top:1.8px;font-size:12px;transform:scaleX(0.870);">PowerUp</span></div><div style="left:65px;top:304px;width:64px;height:16px;overflow:hidden"><span class="t" style="left:4.0px;top:1.8px;font-size:12px;transform:scaleX(0.870);">False</span></div><div class="" style="left:0px;top:320px;width:130px;height:16px;background:#000080"></div><div style="left:2px;top:320px;width:62px;height:16px;overflow:hidden"><span class="t" style="left:0.0px;top:1.8px;font-size:12px;transform:scaleX(0.870);color:#fff;">ReSpawn</span></div><div style="left:65px;top:320px;width:64px;height:16px;overflow:hidden"><span class="t" style="left:4.0px;top:1.8px;font-size:12px;transform:scaleX(0.870);color:#fff;">True</span></div><div style="left:2px;top:336px;width:62px;height:16px;overflow:hidden"><span class="t" style="left:0.0px;top:1.8px;font-size:12px;transform:scaleX(0.870);">Scale</span></div><div style="left:65px;top:336px;width:64px;height:16px;overflow:hidden"><span class="t" style="left:4.0px;top:1.8px;font-size:12px;transform:scaleX(0.870);">1.0</span></div><div style="left:2px;top:352px;width:62px;height:16px;overflow:hidden"><span class="t" style="left:0.0px;top:1.8px;font-size:12px;transform:scaleX(0.870);">SetMaximumAmount</span></div><div style="left:65px;top:352px;width:64px;height:16px;overflow:hidden"><span class="t" style="left:4.0px;top:1.8px;font-size:12px;transform:scaleX(0.870);">False</span></div><div style="left:2px;top:368px;width:62px;height:16px;overflow:hidden"><span class="t" style="left:0.0px;top:1.8px;font-size:12px;transform:scaleX(0.870);">ShadowAlpha</span></div><div style="left:65px;top:368px;width:64px;height:16px;overflow:hidden"><span class="t" style="left:4.0px;top:1.8px;font-size:12px;transform:scaleX(0.870);">128.0</span></div><div style="left:2px;top:384px;width:62px;height:16px;overflow:hidden"><span class="t" style="left:0.0px;top:1.8px;font-size:12px;transform:scaleX(0.870);">ShadowAlphamap</span></div><div style="left:2px;top:400px;width:62px;height:16px;overflow:hidden"><span class="t" style="left:0.0px;top:1.8px;font-size:12px;transform:scaleX(0.870);">ShadowBitmap</span></div><div style="left:2px;top:416px;width:62px;height:16px;overflow:hidden"><span class="t" style="left:0.0px;top:1.8px;font-size:12px;transform:scaleX(0.870);">ShadowSize</span></div><div style="left:65px;top:416px;width:64px;height:16px;overflow:hidden"><span class="t" style="left:4.0px;top:1.8px;font-size:12px;transform:scaleX(0.870);">0</span></div><div style="left:2px;top:432px;width:62px;height:16px;overflow:hidden"><span class="t" style="left:0.0px;top:1.8px;font-size:12px;transform:scaleX(0.870);">szActorName</span></div><div style="left:65px;top:432px;width:64px;height:16px;overflow:hidden"><span class="t" style="left:4.0px;top:1.8px;font-size:12px;transform:scaleX(0.950);">TestWeapon</span></div><div style="left:2px;top:448px;width:62px;height:16px;overflow:hidden"><span class="t" style="left:0.0px;top:1.8px;font-size:12px;transform:scaleX(0.870);">szEntityName</span></div><svg style="left:0;top:0" width="130" height="451" viewBox="0 0 130 451"><path d="M0 0.4h130M0 16.4h130M0 32.4h130M0 48.4h130M0 64.4h130M0 80.4h130M0 96.4h130M0 112.4h130M0 128.4h130M0 144.4h130M0 160.4h130M0 176.4h130M0 192.4h130M0 208.4h130M0 224.4h130M0 240.4h130M0 256.4h130M0 272.4h130M0 288.4h130M0 304.4h130M0 320.4h130M0 336.4h130M0 352.4h130M0 368.4h130M0 384.4h130M0 400.4h130M0 416.4h130M0 432.4h130M0 448.4h130M0.700 0v451M64 0v451M128.400 0v451" stroke="#000" stroke-width="1.700" fill="none"/></svg></div>
<div class="dith" style="left:996px;top:165px;width:16px;height:450px;"></div>
<div class="rz" style="left:996px;top:165px;width:16px;height:16px;"></div>
<svg style="left:999px;top:170px" width="9" height="6"><path d="M0.500 5h8l-4-4.500z" fill="#000"/></svg>
<div class="rz" style="left:996px;top:205px;width:16px;height:340px;"></div>
<div class="" style="left:0px;top:616px;width:1024px;height:1px;background:#fff"></div>
<div class="" style="left:3px;top:618px;width:1px;height:100px;background:#909090"></div>
<div class="" style="left:4px;top:618px;width:1px;height:100px;background:#fff"></div>
<div class="rz" style="left:10px;top:622px;width:96px;height:20px;"></div>
<span class="t" style="left:17.5px;top:625.4px;font-size:12px;transform:scaleX(0.881);">Copy to NotePad</span>
<div class="" style="left:10px;top:656px;width:96px;height:26px;border:1px solid #000;background:#c0c0c0"></div>
<div class="rz" style="left:11px;top:657px;width:94px;height:24px;"></div>
<span class="t" style="left:28.0px;top:662.3px;font-size:12px;transform:scaleX(0.894);">QuickViewer</span>
<div class="rz" style="left:10px;top:696px;width:96px;height:20px;"></div>
<span class="t" style="left:45.6px;top:699.6px;font-size:12px;transform:scaleX(0.834);">Close</span>
<div class="sk" style="left:112px;top:622px;width:883px;height:98px;"></div>
<span class="t" style="left:114.0px;top:625.0px;font-size:10px;transform:scaleX(1.038);">Skipping RWM Gouraud coloring 69 RGB faces (Full Vis only)</span>
<span class="t" style="left:114.0px;top:651.5px;font-size:10px;transform:scaleX(1.032);">Light Data Size</span>
<span class="t" style="left:204.0px;top:651.5px;font-size:10px;">:</span>
<span class="t" style="left:215.5px;top:651.5px;font-size:10px;transform:scaleX(1.011);">7761</span>
<span class="t" style="left:114.0px;top:664.0px;font-size:10px;transform:scaleX(1.016);">Num Light Maps</span>
<span class="t" style="left:211.0px;top:664.0px;font-size:10px;">:</span>
<span class="t" style="left:226.5px;top:664.0px;font-size:10px;transform:scaleX(0.989);">12</span>
<span class="t" style="left:114.0px;top:677.0px;font-size:10px;transform:scaleX(1.201);">------------------------------</span>
<span class="t" style="left:114.0px;top:690.5px;font-size:10px;transform:scaleX(1.044);">Compile successfully completed</span>
<div class="dith" style="left:977px;top:622px;width:16px;height:97px;"></div>
<div class="rz" style="left:977px;top:622px;width:16px;height:16px;"></div>
<div class="rz" style="left:977px;top:703px;width:16px;height:16px;"></div>
<div class="rz" style="left:977px;top:695px;width:16px;height:8px;"></div>
<svg style="left:981px;top:627px" width="9" height="6"><path d="M0.500 5h8l-4-4.500z" fill="#000"/></svg>
<svg style="left:981px;top:708px" width="9" height="6"><path d="M0.500 0.500h8l-4 4.500z" fill="#000"/></svg>
<div class="" style="left:999px;top:617px;width:1px;height:104px;background:#fff"></div>
<div class="" style="left:998px;top:617px;width:1px;height:104px;background:#a0a0a0"></div>
<div class="" style="left:0px;top:719px;width:1024px;height:1px;background:#808080"></div>
<div class="" style="left:0px;top:720px;width:1024px;height:1px;background:#fff"></div>
<span class="t" style="left:2.0px;top:726.7px;font-size:11px;transform:scaleX(0.950);">For Help, press F1</span>
<span class="t" style="left:339.5px;top:726.7px;font-size:11px;transform:scaleX(0.845);">SLOCK</span>
<span class="t" style="left:457.5px;top:726.7px;font-size:11px;transform:scaleX(0.916);">BRUSHMODE:Ent: 1 Brs</span>
<span class="t" style="left:576.3px;top:726.7px;font-size:11px;transform:scaleX(0.929);">x 471</span>
<span class="t" style="left:608.8px;top:726.7px;font-size:11px;transform:scaleX(0.981);">y-447</span>
<span class="t" style="left:642.5px;top:726.7px;font-size:11px;transform:scaleX(0.909);">z</span>
<span class="t" style="left:657.0px;top:726.7px;font-size:11px;transform:scaleX(0.899);">0</span>
<span class="t" style="left:811.5px;top:726.7px;font-size:11px;transform:scaleX(0.983);">Grid: 16 Texel</span>
<span class="t" style="left:929.5px;top:726.7px;font-size:11px;transform:scaleX(0.986);">Snap: 8 Texel</span>
<div class="" style="left:0px;top:741px;width:1024px;height:1px;background:#fff"></div>
<div class="rz" style="left:2px;top:744px;width:54px;height:22px;"></div>
<svg style="left:5px;top:746px" width="19" height="18" viewBox="0 0 19 18"><path d="M6 3c2.500-1.500 5-1.500 7 0c1.500 1 3 1 4.500 0v11c-1.500 1-3 1-4.500 0c-2-1.500-4.500-1.500-7 0z" fill="#000"/><path d="M7 4.200c1.500-1 3-1 4.500-.2v4.500c-1.500-.8-3-.8-4.500.2z" fill="#e03020"/><path d="M12.500 4.500c1.300.7 2.500.7 4 0v4.500c-1.500.7-2.700.7-4 0z" fill="#30b030"/><path d="M7 9.700c1.500-1 3-1 4.500-.2v4c-1.500-.8-3-.8-4.500.2z" fill="#3050e0"/><path d="M12.500 10c1.300.7 2.500.7 4 0v4c-1.500.7-2.700.7-4 0z" fill="#e8d020"/><path d="M2.500 5h2.500M1.500 7.500h3.500M2.500 10h2.500M1.500 12.500h3.500" stroke="#e03020" stroke-width="1.200" stroke-dasharray="1.200 .8"/><path d="M2.500 6.200h2.500M2.500 11.200h2.500" stroke="#3050e0" stroke-width="1" stroke-dasharray="1.200 .8"/></svg>
<span class="t" style="left:24.5px;top:748.8px;font-size:12px;transform:scaleX(0.988);font-weight:bold;">Start</span>
<div class="" style="left:57px;top:744px;width:1px;height:22px;background:#808080"></div>
<div class="" style="left:58px;top:744px;width:1px;height:22px;background:#fff"></div>
<div class="" style="left:61px;top:745px;width:3px;height:21px;border:1px solid;border-color:#fff #808080 #808080 #fff"></div>
<div class="" style="left:180px;top:745px;width:3px;height:21px;border:1px solid;border-color:#fff #808080 #808080 #fff"></div>
<div class="" style="left:749px;top:745px;width:3px;height:21px;border:1px solid;border-color:#fff #808080 #808080 #fff"></div>
<div class="" style="left:826px;top:745px;width:3px;height:21px;border:1px solid;border-color:#fff #808080 #808080 #fff"></div>
<div class="" style="left:176px;top:744px;width:1px;height:22px;background:#909090"></div>
<div class="" style="left:177px;top:744px;width:1px;height:22px;background:#fff"></div>
<div class="" style="left:745px;top:744px;width:1px;height:22px;background:#909090"></div>
<div class="" style="left:746px;top:744px;width:1px;height:22px;background:#fff"></div>
<div class="" style="left:822px;top:744px;width:1px;height:22px;background:#909090"></div>
<div class="" style="left:823px;top:744px;width:1px;height:22px;background:#fff"></div>
<svg style="left:70px;top:744px" width="92" height="22" viewBox="70 744 92 22"><circle cx="80" cy="756" r="6.500" fill="#60a8f0"/><path d="M75.500 756.500h9.500c0-3-2-5-4.800-5s-4.700 2-4.700 5c0 3 2 5 4.700 5c2 0 3.500-1 4.300-2.500" fill="none" stroke="#1050c0" stroke-width="2"/><path d="M73 760c-2 3 1 4 5 1.500M86 750c2-3-1-4-4-2" fill="none" stroke="#40a0ff" stroke-width="1.200"/><path d="M96.500 749.500h13v13h-13z" fill="#f4f0e0" stroke="#183878" stroke-width="2"/><path d="M98 762l9-11l2.500 1.500l-9 11z" fill="#f0d040" stroke="#604000" stroke-width=".8"/><path d="M98 752h6M98 755h4" stroke="#6080c0"/><rect x="121.500" y="748.500" width="12" height="10" fill="#e8f0ff" stroke="#6080c0"/><rect x="121.500" y="748.500" width="12" height="2.500" fill="#2050c0"/><path d="M120 763l4-9M124 754l2 4" stroke="#c06040" stroke-width="1.300"/><path d="M124 754h7M124 756.500h7" stroke="#80a0d0"/><circle cx="151" cy="755" r="5.500" fill="#c0e0f0" stroke="#406080"/><path d="M146 750c3 2 7 6 9 9.500M145.500 755h11M151 749.500v11" stroke="#3070a0" stroke-width=".8" fill="none"/><path d="M144 748l5 5" stroke="#204060" stroke-width="1.600"/><path d="M147 763h8M151 760.500v2.500" stroke="#404040" stroke-width="1.300"/></svg>
<span class="t" style="left:166.0px;top:742.8px;font-size:15px;transform:scaleX(1.079);font-weight:bold;">»</span>
<span class="t" style="left:812.0px;top:742.8px;font-size:15px;transform:scaleX(1.079);font-weight:bold;">»</span>
<span class="t" style="left:894.0px;top:742.8px;font-size:15px;transform:scaleX(1.079);font-weight:bold;">»</span>
<div class="dith" style="left:187px;top:744px;width:108px;height:22px;border:1px solid;border-color:#404040 #fff #fff #404040;box-shadow:inset 1px 1px 0 #808080"></div>
<div class="rz" style="left:297px;top:744px;width:108px;height:22px;"></div>
<div class="rz" style="left:407px;top:744px;width:108px;height:22px;"></div>
<div class="rz" style="left:517px;top:744px;width:108px;height:22px;"></div>
<div class="rz" style="left:627px;top:744px;width:108px;height:22px;"></div>
<svg style="left:193px;top:746px" width="15" height="17" viewBox="0 0 15 17"><path d="M3.200 1.500C1.800 4 1.800 7 2.800 9.500S5.500 14 7.300 15.500C9.100 14 10.800 12 11.800 9.500S12.800 4 11.400 1.500L10 5L7.300 3.500L4.600 5z" fill="#dcdcf6"/><path d="M3.200 1C1.400 3.500 1.400 6.800 2.500 9.300S5.300 14 7.300 15.800M11.400 1C13.200 3.500 13.200 6.800 12.100 9.300S9.300 14 7.300 15.800" fill="none" stroke="#14148c" stroke-width="2"/><path d="M7.300 2.400l1.500 1.400l-1.500 1.400l-1.500-1.400z" fill="#14148c"/><path d="M3 8.800Q7.300 5.800 11.600 8.800L11 10.800Q7.300 8.200 3.600 10.800z" fill="#14148c"/><rect x="6.300" y="11.300" width="2" height="2.600" fill="#14148c"/></svg>
<span class="t" style="left:211.0px;top:749.3px;font-size:12px;font-weight:bold;">RFEditPro - ...</span>
<svg style="left:302px;top:746px" width="18" height="18" viewBox="0 0 18 18"><circle cx="9" cy="9" r="8" fill="#e87010"/><circle cx="9.500" cy="8" r="4.800" fill="#3050c0"/><path d="M2 6c2-3 5-4.500 8-4c-3 1-4 3-3.500 5c1 1 2.500 1 3 2c-2 1-4 3-3 5c-3-1-5.500-4-4.500-8z" fill="#f0a020"/><circle cx="10.500" cy="6.500" r="1.500" fill="#80a0f0"/></svg>
<span class="t" style="left:320.5px;top:749.3px;font-size:12px;transform:scaleX(0.873);">Online Help - M...</span>
<svg style="left:412px;top:748px" width="18" height="15" viewBox="0 0 18 15"><path d="M1.500 3.500l1-2h5l1 2h7v10h-14z" fill="#f0e060" stroke="#000" stroke-width="1"/><path d="M1.500 13.500l2-7h13.500l-2 7z" fill="#f8f0a0" stroke="#000" stroke-width="1"/></svg>
<span class="t" style="left:430.5px;top:749.3px;font-size:12px;transform:scaleX(0.867);">RealityFactory</span>
<svg style="left:522px;top:746px" width="18" height="18" viewBox="0 0 18 18"><circle cx="9" cy="9" r="8" fill="#e87010"/><circle cx="9.500" cy="8" r="4.800" fill="#3050c0"/><path d="M2 6c2-3 5-4.500 8-4c-3 1-4 3-3.500 5c1 1 2.500 1 3 2c-2 1-4 3-3 5c-3-1-5.500-4-4.500-8z" fill="#f0a020"/><circle cx="10.500" cy="6.500" r="1.500" fill="#80a0f0"/></svg>
<span class="t" style="left:540.5px;top:749.3px;font-size:12px;transform:scaleX(0.873);">Reality Factory ...</span>
<svg style="left:631px;top:746px" width="19" height="19" viewBox="0 0 19 19"><path d="M4 14.500l4-11.500h9l-4 11.500z" fill="#60d8e8" stroke="#104060" stroke-width="1.200"/><path d="M3 16.500l1-2h9l-1 2z" fill="#fff" stroke="#104060" stroke-width=".9"/><path d="M8.500 6h6M7.500 8.500h6M6.500 11h6" stroke="#b0f0f8" stroke-width="1"/></svg>
<span class="t" style="left:650.5px;top:749.3px;font-size:12px;transform:scaleX(0.868);">attributes - Not...</span>
<span class="t" style="left:757.5px;top:749.3px;font-size:12px;transform:scaleX(0.863);">halo music</span>
<span class="t" style="left:834.5px;top:749.3px;font-size:12px;transform:scaleX(0.878);">shareddocs</span>
<div class="" style="left:908px;top:744px;width:113px;height:22px;border:1px solid;border-color:#808080 #fff #fff #808080"></div>
<div class="" style="left:905px;top:744px;width:1px;height:22px;background:#fff"></div>
<div class="" style="left:904px;top:744px;width:1px;height:22px;background:#909090"></div>
<svg style="left:910px;top:746px" width="72" height="19" viewBox="910 746 72 19"><rect x="912.500" y="748.500" width="14" height="11" fill="#fff" stroke="#203080"/><rect x="912.500" y="748.500" width="14" height="3" fill="#203080"/><path d="M914 754h4M914 756.500h4" stroke="#203080" stroke-width="1.300"/><circle cx="924" cy="759" r="4" fill="#fff" stroke="#c01010" stroke-width="1.600"/><path d="M924 757v2h1.500" stroke="#000" stroke-width=".8" fill="none"/><rect x="931" y="748" width="14" height="15" fill="#000"/><path d="M931 748h5l2 7h-7z" fill="#f0f020"/><path d="M931 755h7l0 8h-7z" fill="#20a020"/><path d="M938 757l7-3v9h-7z" fill="#e02020"/><rect x="946" y="748" width="8" height="15" fill="#a01010"/><rect x="954" y="748" width="8" height="15" fill="#f0e020"/><rect x="964" y="747" width="16" height="17" rx="2" fill="#000"/></svg>
<span class="t" style="left:947.5px;top:750.8px;font-size:12px;transform:scaleX(0.819);font-weight:bold;color:#fff;">Z</span>
<span class="t" style="left:955.0px;top:750.8px;font-size:12px;transform:scaleX(0.750);font-weight:bold;color:#c01010;">A</span>
<span class="t" style="left:972.3px;top:750.1px;font-size:14px;transform:scaleX(-0.722);font-weight:bold;color:#fff;">R</span>
<span class="t" style="left:972.0px;top:750.1px;font-size:14px;transform:scaleX(0.819);font-weight:bold;color:#fff;">F</span>
<span class="t" style="left:990.0px;top:749.8px;font-size:12px;transform:scaleX(0.899);">9:17</span>
</div>
</body></html>
